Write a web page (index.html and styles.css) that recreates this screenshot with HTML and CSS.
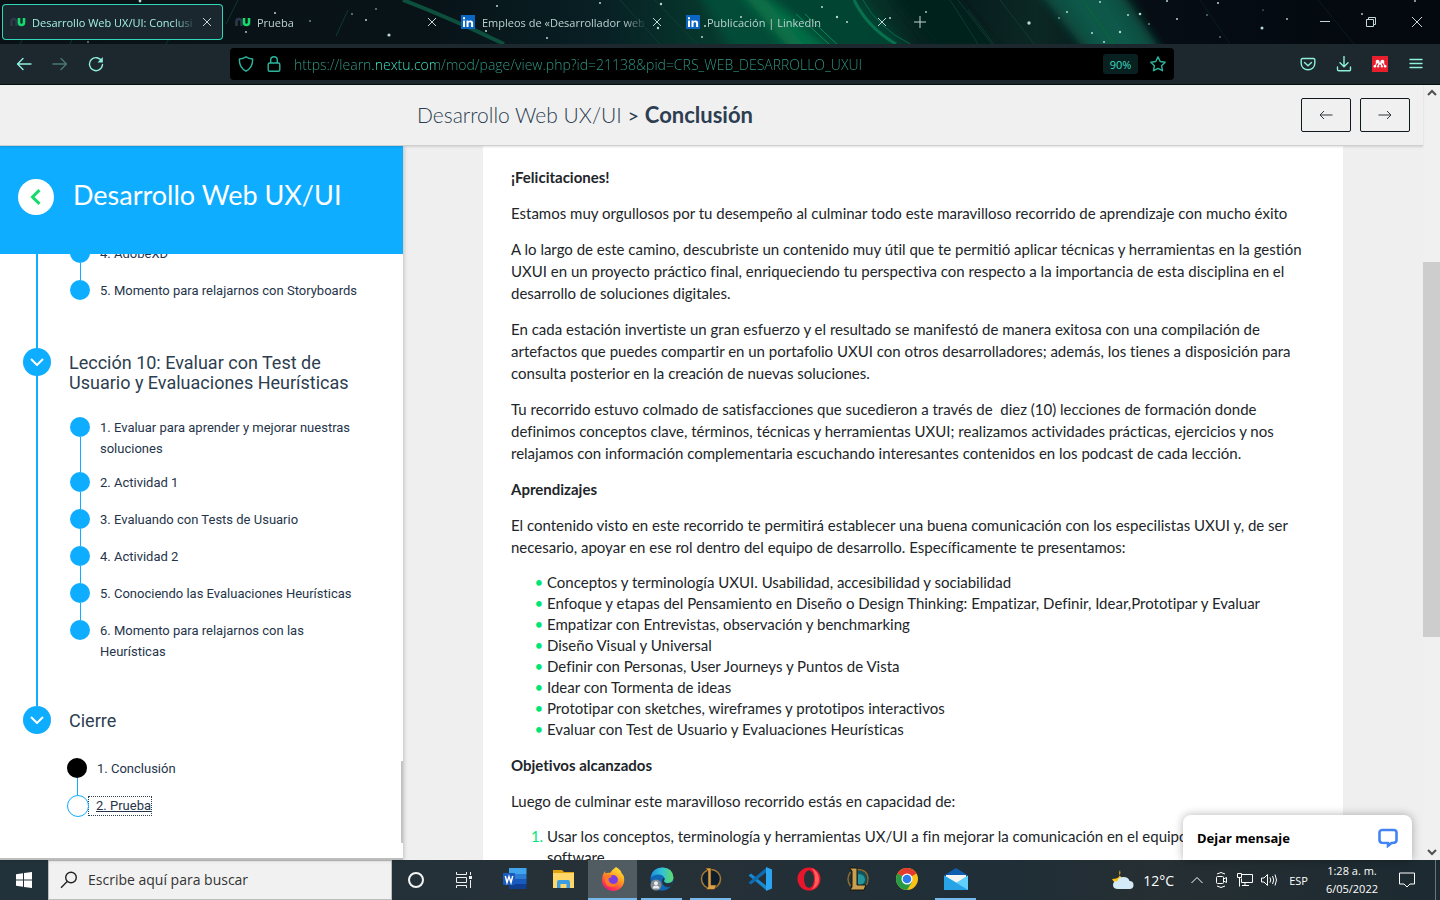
FILE: index.html
```html
<!DOCTYPE html>
<html lang="es">
<head>
<meta charset="utf-8">
<title>Desarrollo Web UX/UI: Conclusión</title>
<link rel="stylesheet" href="styles.css">
</head>
<body>
<div class="screen">
  <div class="tabstrip">
    <svg class="sky" viewBox="0 0 1440 44" preserveAspectRatio="none" aria-hidden="true">
      <defs>
        <linearGradient id="g0" x1="0" x2="1"><stop offset="0" stop-color="#091116"/><stop offset=".3" stop-color="#081318"/><stop offset=".42" stop-color="#082024"/><stop offset=".5" stop-color="#063a2e"/><stop offset=".6" stop-color="#063529"/><stop offset=".66" stop-color="#071b1d"/><stop offset=".72" stop-color="#0b2824"/><stop offset=".8" stop-color="#060d14"/><stop offset="1" stop-color="#04080f"/></linearGradient>
        <filter id="soft" x="-10%" y="-50%" width="120%" height="200%"><feGaussianBlur stdDeviation="5"/></filter>
      </defs>
      <rect width="1440" height="44" fill="url(#g0)"/>
      <g filter="url(#soft)">
        <path d="M690-20h60l70 84h-80z" fill="#07543a" opacity=".7"/>
        <path d="M730-20h14l112 84h-54z" fill="#087a4c" opacity=".8"/>
        <path d="M752-20h90l80 84h-80z" fill="#064935" opacity=".8"/>
        <path d="M880-20h60l70 84h-64z" fill="#04201c"/>
        <path d="M1030-20h84l56 84h-74z" fill="#0f4f42"/>
        <path d="M1054-20h44l50 84h-36z" fill="#12604f" opacity=".6"/>
      </g>
      <g fill="none" stroke-width="1">
        <path d="M403 0Q450 18 504 44" stroke="#0d4f3d" stroke-width="4"/>
        <path d="M854 0Q868 28 896 44" stroke="#0b8558" stroke-width="3" opacity=".7"/>
        <path d="M863 0Q878 28 910 44" stroke="#0a6a48"/>
        <path d="M796 14l33 30M805 14l36 34" stroke="#0b8a58"/>
        <path d="M1084 2l30 42" stroke="#0c6a2f"/>
        <path d="M20 44L34 18M70 44L88 6M166 44l22-38M226 24l12-24M336 36l12-26" stroke="#0b3b2f"/>
        <path d="M958 0l34 44M950 0l28 44M1000 0l34 44M968 10l26 34M620 0l40 44M655 0l42 44" stroke="#164139" opacity=".7"/>
        <path d="M1318 0l36 44M1200 0l30 44" stroke="#0a1c20"/>
      </g>
      <g fill="#b9d8d5">
        <circle cx="140" cy="1" r="1.4"/><circle cx="389" cy="35" r="1.6"/><circle cx="366" cy="20" r="1"/><circle cx="275" cy="13" r="1"/><circle cx="376" cy="9" r=".8"/><circle cx="246" cy="32" r=".9"/><circle cx="310" cy="21" r=".8"/><circle cx="352" cy="14" r=".8"/><circle cx="88" cy="42" r=".8"/>
        <circle cx="497" cy="6" r="1"/><circle cx="486" cy="31" r="1"/><circle cx="661" cy="4" r="1.2"/><circle cx="658" cy="28" r="1.2"/><circle cx="547" cy="38" r="1"/><circle cx="600" cy="3" r="1"/><circle cx="741" cy="17" r="1"/><circle cx="822" cy="7" r="1"/><circle cx="837" cy="17" r="1.2"/><circle cx="847" cy="22" r="1"/><circle cx="702" cy="37" r="1"/><circle cx="926" cy="12" r=".9"/><circle cx="890" cy="18" r="1"/><circle cx="705" cy="26" r="1"/>
        <circle cx="1029" cy="23" r="1.7"/><circle cx="1067" cy="12" r="1"/><circle cx="1059" cy="18" r=".8"/><circle cx="1100" cy="2" r="1"/><circle cx="1140" cy="14" r="1.3"/><circle cx="1128" cy="15" r="1"/><circle cx="1149" cy="24" r=".8"/><circle cx="1092" cy="33" r="1"/><circle cx="1120" cy="32" r="1.2"/><circle cx="1104" cy="42" r="1"/><circle cx="1167" cy="1" r="1"/><circle cx="1218" cy="3" r="1"/><circle cx="1177" cy="19" r="1"/><circle cx="1262" cy="28" r="1.5"/><circle cx="1263" cy="10" r=".6"/><circle cx="1287" cy="19" r=".9"/><circle cx="1362" cy="14" r=".9"/><circle cx="1415" cy="1" r=".9"/><circle cx="1220" cy="37" r=".7"/><circle cx="1207" cy="15" r=".7"/>
      </g>
    </svg>
    <div class="tab tab-on">
      <svg width="16" height="16" viewBox="0 0 16 16" fill="none" stroke-width="2.6"><path d="M1.5 12V7.500a2.500 2.500 0 0 1 5 0V12" stroke="#2b3a4b"/><path d="M9 4v4.500a2.500 2.500 0 0 0 5 0V4" stroke="#14dc6c"/></svg>
      <span class="tab-name">Desarrollo Web UX/UI: Conclusi</span>
      <button class="tab-x" aria-label="Cerrar pestaña"><svg width="8" height="8" viewBox="0 0 8 8"><path d="M0 0l8 8M8 0L0 8"/></svg></button>
    </div>
    <div class="tab">
      <svg width="16" height="16" viewBox="0 0 16 16" fill="none" stroke-width="2.6"><path d="M1.500 12V7.500a2.500 2.500 0 0 1 5 0V12" stroke="#2b3a4b"/><path d="M9 4v4.500a2.500 2.500 0 0 0 5 0V4" stroke="#14dc6c"/></svg>
      <span class="tab-name">Prueba</span>
      <button class="tab-x" aria-label="Cerrar pestaña"><svg width="8" height="8" viewBox="0 0 8 8"><path d="M0 0l8 8M8 0L0 8"/></svg></button>
    </div>
    <div class="tab">
      <svg width="16" height="16" viewBox="0 0 16 16"><path d="M1 1h14v14H1z" fill="#0a66c2"/><path d="M3 6.500h2V13H3zM3 3.200h2v2H3zM6.500 6.500h2v1c1-1.700 4.600-1.600 4.600 1.500v4h-2V9.500c0-1.800-2.600-1.800-2.600 0V13h-2z" fill="#fff"/></svg>
      <span class="tab-name">Empleos de «Desarrollador web</span>
      <button class="tab-x" aria-label="Cerrar pestaña"><svg width="8" height="8" viewBox="0 0 8 8"><path d="M0 0l8 8M8 0L0 8"/></svg></button>
    </div>
    <div class="tab">
      <svg width="16" height="16" viewBox="0 0 16 16"><path d="M1 1h14v14H1z" fill="#0a66c2"/><path d="M3 6.500h2V13H3zM3 3.200h2v2H3zM6.500 6.500h2v1c1-1.700 4.600-1.600 4.600 1.500v4h-2V9.500c0-1.800-2.600-1.800-2.600 0V13h-2z" fill="#fff"/></svg>
      <span class="tab-name">Publicación | LinkedIn</span>
      <button class="tab-x" aria-label="Cerrar pestaña"><svg width="8" height="8" viewBox="0 0 8 8"><path d="M0 0l8 8M8 0L0 8"/></svg></button>
    </div>
    <button class="tab-new" aria-label="Nueva pestaña"><svg width="12" height="12" viewBox="0 0 12 12"><path d="M6 0v12M0 6h12"/></svg></button>
    <div class="winbtns">
      <button aria-label="Minimizar"><svg width="10" height="10" viewBox="0 0 10 10"><path d="M0 4.500h10"/></svg></button>
      <button aria-label="Restaurar"><svg width="10" height="10" viewBox="0 0 10 10"><path d="M.5 2.500h7v7h-7zM2.500 2.500v-2h7v7h-2"/></svg></button>
      <button aria-label="Cerrar"><svg width="10" height="10" viewBox="0 0 10 10"><path d="M0 0l10 10M10 0L0 10"/></svg></button>
    </div>
  </div>

  <div class="toolbar">
    <button class="tool" aria-label="Atrás"><svg width="16" height="16" viewBox="0 0 16 16"><path d="M15 8H1.500M7 2.500L1.500 8 7 13.500"/></svg></button>
    <button class="tool tool-dim" aria-label="Adelante"><svg width="16" height="16" viewBox="0 0 16 16"><path d="M1 8h13.500M9 2.500L14.500 8 9 13.500"/></svg></button>
    <button class="tool" aria-label="Recargar"><svg width="16" height="16" viewBox="0 0 16 16"><path d="M13.700 5A6.500 6.500 0 1 0 14.500 8.500"/><path d="M14.800 1v5.500H9.500z" fill="#8ff0dc" stroke="none"/></svg></button>
    <span class="spring"></span>
    <div class="urlbar">
      <svg width="16" height="16" viewBox="0 0 16 16"><path d="M8 .8C10 2 12 2.700 14.600 3c.3 5.200-1.600 9.600-6.600 12.200C3 12.600 1.100 8.200 1.400 3 4 2.700 6 2 8 .8z"/></svg>
      <svg width="16" height="16" viewBox="0 0 16 16"><rect x="2.200" y="7" width="11.600" height="8.200" rx="1.500"/><path d="M4.700 7V4a3.300 3.300 0 0 1 6.600 0v3"/></svg>
      <input class="url" type="text" aria-label="Dirección" value="https://learn.nextu.com/mod/page/view.php?id=21138&amp;pid=CRS_WEB_DESARROLLO_UXUI">
      <button class="zoom-pct">90%</button>
      <button class="star" aria-label="Marcador"><svg width="16" height="16" viewBox="0 0 16 16"><path d="M8 .9l2.200 4.600 5 .7-3.600 3.500.9 5L8 12.300l-4.500 2.400.9-5L.8 6.200l5-.7z"/></svg></button>
    </div>
    <span class="spring"></span>
    <button class="tool" aria-label="Pocket"><svg width="16" height="16" viewBox="0 0 16 16"><path d="M2.500 2.500h11A1.300 1.300 0 0 1 14.800 4v3.500a6.800 6.300 0 0 1-13.600 0V4a1.300 1.300 0 0 1 1.300-1.500zM4.500 6.500L8 9.700l3.500-3.200"/></svg></button>
    <button class="tool" aria-label="Descargas"><svg width="16" height="16" viewBox="0 0 16 16"><path d="M8 .5v10M4 6.700l4 4 4-4M1.500 11v2.500a1.300 1.300 0 0 0 1.300 1.300h10.400a1.300 1.300 0 0 0 1.300-1.300V11"/></svg></button>
    <button class="tool" aria-label="Mendeley"><svg width="16" height="16" viewBox="0 0 16 16"><path d="M0 0h16v16H0z" fill="#e8202e" stroke="none"/><g fill="#fff" stroke="none"><circle cx="5.600" cy="5.600" r="1.900"/><circle cx="10.400" cy="5.600" r="1.900"/><circle cx="2.900" cy="10.300" r="1.300"/><circle cx="13.100" cy="10.300" r="1.300"/><circle cx="8" cy="7.500" r="1.300"/><circle cx="6.200" cy="10.400" r="1.100"/><circle cx="9.800" cy="10.400" r="1.100"/></g><path d="M4.700 5.500q-.2 3-1.800 5M11.300 5.500q.2 3 1.800 5M7 7.500l-.8 3M9 7.500l.8 3" stroke="#fff" stroke-width="1.200"/></svg></button>
    <button class="tool" aria-label="Menú"><svg width="16" height="16" viewBox="0 0 16 16"><path d="M2 3.500h12M2 7.500h12M2 11.500h12"/></svg></button>
  </div>

  <div class="viewport">
    <div class="page">
      <header class="topbar">
        <h1 class="crumbs">Desarrollo Web UX/UI <span>&gt;</span> <b>Conclusión</b></h1>
        <nav class="pager">
          <button aria-label="Anterior"><svg width="14" height="10" viewBox="0 0 14 10"><path d="M13.500 5H1M5 1L1 5l4 4"/></svg></button>
          <button aria-label="Siguiente"><svg width="14" height="10" viewBox="0 0 14 10"><path d="M.5 5H13M9 1l4 4-4 4"/></svg></button>
        </nav>
      </header>
      <div class="columns">
        <aside class="side">
          <div class="side-title">
            <button class="back" aria-label="Volver"><svg width="12" height="16" viewBox="0 0 12 16"><path d="M9.500 1.200L2.500 8l7 6.800"/></svg></button>
            <h2>Desarrollo Web UX/UI</h2>
          </div>
          <div class="lessons">
            <section class="lesson">
              <ul>
                <li><a href="#">4. AdobeXD</a></li>
                <li><a href="#">5. Momento para relajarnos con Storyboards</a></li>
              </ul>
            </section>
            <section class="lesson">
              <div class="lesson-head">
                <button class="fold" aria-label="Plegar"><svg width="14" height="8" viewBox="0 0 14 8"><path d="M1 1l6 6 6-6"/></svg></button>
                <h3>Lección 10: Evaluar con Test de Usuario y Evaluaciones Heurísticas</h3>
              </div>
              <ul>
                <li><a href="#">1. Evaluar para aprender y mejorar nuestras soluciones</a></li>
                <li><a href="#">2. Actividad 1</a></li>
                <li><a href="#">3. Evaluando con Tests de Usuario</a></li>
                <li><a href="#">4. Actividad 2</a></li>
                <li><a href="#">5. Conociendo las Evaluaciones Heurísticas</a></li>
                <li><a href="#">6. Momento para relajarnos con las Heurísticas</a></li>
              </ul>
            </section>
            <section class="lesson lesson-last">
              <div class="lesson-head">
                <button class="fold" aria-label="Plegar"><svg width="14" height="8" viewBox="0 0 14 8"><path d="M1 1l6 6 6-6"/></svg></button>
                <h3>Cierre</h3>
              </div>
              <ul>
                <li class="now"><a href="#">1. Conclusión</a></li>
                <li class="todo"><a class="focused" href="#">2. Prueba</a></li>
              </ul>
            </section>
            <span class="side-thumb"></span>
          </div>
        </aside>
        <main class="content">
          <article class="article">
            <p><b>¡Felicitaciones!</b></p>
            <p>Estamos muy orgullosos por tu desempeño al culminar todo este maravilloso recorrido de aprendizaje con mucho éxito</p>
            <p>A lo largo de este camino, descubriste un contenido muy útil que te permitió aplicar técnicas y herramientas en la gestión<br>UXUI en un proyecto práctico final, enriqueciendo tu perspectiva con respecto a la importancia de esta disciplina en el<br>desarrollo de soluciones digitales.</p>
            <p>En cada estación invertiste un gran esfuerzo y el resultado se manifestó de manera exitosa con una compilación de<br>artefactos que puedes compartir en un portafolio UXUI con otros desarrolladores; además, los tienes a disposición para<br>consulta posterior en la creación de nuevas soluciones.</p>
            <p>Tu recorrido estuvo colmado de satisfacciones que sucedieron a través de&nbsp; diez (10) lecciones de formación donde<br>definimos conceptos clave, términos, técnicas y herramientas UXUI; realizamos actividades prácticas, ejercicios y nos<br>relajamos con información complementaria escuchando interesantes contenidos en los podcast de cada lección.</p>
            <p><b>Aprendizajes</b></p>
            <p>El contenido visto en este recorrido te permitirá establecer una buena comunicación con los especilistas UXUI y, de ser<br>necesario, apoyar en ese rol dentro del equipo de desarrollo. Específicamente te presentamos:</p>
            <ul>
              <li>Conceptos y terminología UXUI. Usabilidad, accesibilidad y sociabilidad</li>
              <li>Enfoque y etapas del Pensamiento en Diseño o Design Thinking: Empatizar, Definir, Idear,Prototipar y Evaluar</li>
              <li>Empatizar con Entrevistas, observación y benchmarking</li>
              <li>Diseño Visual y Universal</li>
              <li>Definir con Personas, User Journeys y Puntos de Vista</li>
              <li>Idear con Tormenta de ideas</li>
              <li>Prototipar con sketches, wireframes y prototipos interactivos</li>
              <li>Evaluar con Test de Usuario y Evaluaciones Heurísticas</li>
            </ul>
            <p><b>Objetivos alcanzados</b></p>
            <p>Luego de culminar este maravilloso recorrido estás en capacidad de:</p>
            <ol>
              <li>Usar los conceptos, terminología y herramientas UX/UI a fin mejorar la comunicación en el equipo<br>software.</li>
            </ol>
          </article>
        </main>
      </div>
      <button class="chat"><span>Dejar mensaje</span><svg width="20" height="20" viewBox="0 0 20 20"><path d="M4.500 2h11Q18.500 2 18.500 4.500v7.500q0 2.500-2.500 2.700l-2.500.3-3.500 2.800v-2.800L4 14.700Q1.500 14.500 1.500 12V4.500Q1.500 2 4.500 2z" fill="none" stroke="#4384f5" stroke-width="2.600"/></svg></button>
    </div>
    <div class="scrollbar">
      <svg width="10" height="16" viewBox="0 0 10 16"><path d="M1 10l4-4 4 4"/></svg>
      <div class="track"><span class="thumb"></span></div>
      <svg width="10" height="16" viewBox="0 0 10 16"><path d="M1 6l4 4 4-4"/></svg>
    </div>
  </div>

  <footer class="taskbar">
    <button class="task-btn" aria-label="Inicio"><svg width="16" height="16" viewBox="0 0 16 16"><path d="M0 2.200l7-1v6.300H0zM8 1l8-1v7.500H8zM0 8.500h7v6.300l-7-1zM8 8.500h8V16l-8-1z" fill="#fff"/></svg></button>
    <label class="search">
      <svg width="18" height="18" viewBox="0 0 18 18"><circle cx="11" cy="6.500" r="5.300"/><path d="M7.200 10.400L1 16.700"/></svg>
      <input type="text" placeholder="Escribe aquí para buscar" aria-label="Buscar">
    </label>
    <button class="task-btn" aria-label="Cortana"><svg width="18" height="18" viewBox="0 0 18 18"><circle cx="9" cy="9" r="7" fill="none" stroke="#f4f4f4" stroke-width="2"/></svg></button>
    <button class="task-btn" aria-label="Vista de tareas"><svg width="18" height="16" viewBox="0 0 18 16" fill="none" stroke="#f0f0f0"><path d="M1.500 0v2.500h10V0M1.500 5.500h10v5h-10zM1.500 16v-2.500h10V16M15.500 0v3M15.500 8v8"/><path d="M14 4h3v3h-3z" fill="#f0f0f0" stroke="none"/></svg></button>
    <div class="apps">
      <button class="app" aria-label="Word"><svg width="24" height="24" viewBox="0 0 24 24"><path d="M6 1h17.500v6H6z" fill="#41a5ee"/><path d="M6 7h17.500v5H6z" fill="#2b7cd3"/><path d="M6 12h17.500v5H6z" fill="#185abd"/><path d="M6 17h17.500v5H6z" fill="#103f91"/><rect y="6" width="12" height="12" rx="1" fill="#185abd"/><path d="M2.300 9l1.700 6.500L6 9.500l2 6L9.700 9" fill="none" stroke="#fff" stroke-width="1.500"/></svg></button>
      <button class="app" aria-label="Explorador"><svg width="24" height="24" viewBox="0 0 24 24"><path d="M1 3h9l2 2h10v6H1z" fill="#e2a210"/><path d="M1 6h21v15H1z" fill="#ffd869"/><path d="M5 21v-6q0-2 2-2h9q2 0 2 2v6h-3.500v-4h-6v4z" fill="#3d9de2"/></svg></button>
      <button class="app app-on app-top" aria-label="Firefox"><svg width="24" height="24" viewBox="0 0 24 24"><defs><linearGradient id="ff" x1=".8" y1="0" x2=".25" y2="1"><stop offset="0" stop-color="#ffe83c"/><stop offset=".45" stop-color="#ff9a1e"/><stop offset=".8" stop-color="#ff3750"/><stop offset="1" stop-color="#e3158b"/></linearGradient></defs><path d="M15 0q5 3 5.500 6 3 2.500 2.700 7A11 11 0 0 1 1 13Q.8 8 4 4l.5 2.500Q7 5.500 9 6q3-4 6-6z" fill="url(#ff)"/><circle cx="12" cy="13" r="5" fill="#7a3fe0"/><path d="M4 8.500q4-2 7 .5-.5 1.800-3.500 2.300Q7 16 12 17q4.500 0 5-4 .5 4.500-3.500 6.500Q7 21 4.500 16 3 12 4 8.500z" fill="#ff7a24"/></svg></button>
      <button class="app app-on" aria-label="Edge"><svg width="24" height="24" viewBox="0 0 24 24"><defs><linearGradient id="ed" x1="0" x2="1"><stop offset="0" stop-color="#1b8fdc"/><stop offset=".5" stop-color="#32c2d8"/><stop offset="1" stop-color="#5fdc62"/></linearGradient></defs><circle cx="12" cy="12" r="11.500" fill="#1067b5"/><path d="M.5 11Q2 .5 12.500.5 23 1 23.500 10.500q-.5 5.500-6.500 5.500-5-.5-2.500-4Q14 7.500 8.500 7.500 3 7.500.5 11z" fill="url(#ed)"/><path d="M15 11.500q-2.500 4 2 4.700 4 .3 6.300-2.200l-2 5.500q-4 1.500-7-.5-4-3.500-1-8z" fill="#25323a"/><circle cx="6" cy="18" r="5.500" fill="#858b90"/><circle cx="6" cy="16.300" r="2" fill="#eceff1"/><path d="M2.500 21.500q.5-3 3.500-3t3.500 3" fill="#eceff1"/></svg></button>
      <button class="app app-on" aria-label="League of Legends"><svg width="24" height="24" viewBox="0 0 24 24"><circle cx="12" cy="12" r="9.500" fill="#0d1d2c" stroke="#a57a35" stroke-width="1.500"/><path d="M6.500 1H12v17h5.500L15.500 22.500H7l2-3V4z" fill="#d9a04b" stroke="#3a2a12" stroke-width=".6"/></svg></button>
      <button class="app" aria-label="Visual Studio Code"><svg width="24" height="24" viewBox="0 0 24 24"><path d="M.5 8.500l2.500-2 15 12V23z" fill="#1889d1"/><path d="M.5 15.500l2.500 2L18 5.500V1z" fill="#0d6cb0"/><path d="M18 0l6 2.500v19L18 24z" fill="#2ba5f2"/></svg></button>
      <button class="app" aria-label="Opera"><svg width="24" height="24" viewBox="0 0 24 24"><circle cx="12" cy="12" r="11.500" fill="#e7162b"/><path d="M14 1a11.500 11.500 0 0 1 0 22q4-3 4-11T14 1z" fill="#ff5c5c"/><ellipse cx="12" cy="12" rx="5" ry="8.700" fill="#25323a"/></svg></button>
      <button class="app" aria-label="League of Legends"><svg width="24" height="24" viewBox="0 0 24 24"><path d="M11 3q10 1 10 9 0 5-4 7h-6z" fill="#0f5561"/><path d="M12 7q7 0 7 6-1 4-4 5h-3z" fill="#27969c"/><path d="M11 2.500q11 0 11 9.500 0 5-3 7" fill="none" stroke="#8b6a2e" stroke-width="1.300"/><path d="M4.500 5q-5 7 0 14" fill="none" stroke="#8b6a2e" stroke-width="1.500"/><path d="M3.500 1H11v17h9l-2 5h-14l2-3V4z" fill="#c9a050" stroke="#18140c"/></svg></button>
      <button class="app" aria-label="Chrome"><svg width="24" height="24" viewBox="0 0 24 24"><circle cx="12" cy="12" r="11" fill="#fbc116"/><path d="M12 12L2.500 6.500A11 11 0 0 1 21.500 6.500z" fill="#e33b2e"/><path d="M12 12L2.500 6.500A11 11 0 0 0 12 23l5-8z" fill="#269a45"/><path d="M12 7h9.800l-.3-.5L12 3z" fill="#e33b2e"/><circle cx="12" cy="12" r="5.500" fill="#fff"/><circle cx="12" cy="12" r="4.300" fill="#2b7de9"/></svg></button>
      <button class="app app-on" aria-label="Correo"><svg width="24" height="24" viewBox="0 0 24 24"><path d="M0 8.500L12 1l12 7.500z" fill="#0e5db0"/><path d="M2 8h20v9H2z" fill="#f4f4f4"/><path d="M0 8.500L13 16l11-7.500V23H0z" fill="#3cc0f5"/><path d="M24 8.500L12 16l12 7z" fill="#5fd1fb"/><path d="M0 8.500L24 23H0z" fill="#28a3e6"/></svg></button>
    </div>
    <div class="tray">
      <div class="weather"><svg width="24" height="20" viewBox="0 0 24 20"><path d="M9 0q-2 4 1 7t8 3q-3 5-9 4.500-6-1-8-5.500 6 0 7.500-3T9 0z" fill="#fcc419"/><path d="M7 19q-5 0-5-4t4.500-4q1-4 6-4t6 4q4 0 4 4t-4 4z" fill="#d3eaf8"/></svg><span>12°C</span></div>
      <button aria-label="Iconos ocultos"><svg width="14" height="14" viewBox="0 0 14 14"><path d="M1.500 10L7 4.500 12.500 10"/></svg></button>
      <button aria-label="Cámara"><svg width="14" height="18" viewBox="0 0 14 18"><path d="M3 3q4-3 8 0M3 15q4 3 8 0M3.500 5.500h5q1 0 1 1v5q0 1-1 1h-5q-1 0-1-1v-5q0-1 1-1zM9.500 8l3-1.500v5l-3-1.500"/></svg></button>
      <button aria-label="Red"><svg width="18" height="16" viewBox="0 0 18 16"><path d="M6 2.500h10.500v8h-11v-4M9 10.500v3M6 13.500h7M1.500 1.500h4v4h-4zM3.500 5.500v9"/></svg></button>
      <button aria-label="Volumen"><svg width="18" height="16" viewBox="0 0 18 16"><path d="M1.500 6H4l3.500-3.500v11L4 10H1.500zM10 5.500q1.500 2.500 0 5M12.500 4q2.500 4 0 8M15 2.500q3 5.500 0 11"/></svg></button>
      <span class="lang">ESP</span>
      <div class="clock"><span>1:28 a. m.</span><span>6/05/2022</span></div>
      <button class="notif" aria-label="Notificaciones"><svg width="18" height="18" viewBox="0 0 18 18"><path d="M1.500 2h15v11H12l-3 3-3-3H1.500z"/></svg></button>
      <span class="peek"></span>
    </div>
  </footer>
</div>
</body>
</html>
```
FILE: styles.css
```css
* { box-sizing: border-box; }

body {
  margin: 0;
  font-family: "Open Sans", "Noto Sans", sans-serif;
  font-size: 11px;
  color: #212529;
}

button {
  margin: 0;
  padding: 0;
  border: 0;
  background: none;
  font: inherit;
  color: inherit;
  display: flex;
  align-items: center;
  justify-content: center;
}

svg { display: block; flex: none; }
h1, h2, h3, ul, ol, p { margin: 0; padding: 0; }

.screen {
  height: 100vh;
  display: flex;
  flex-direction: column;
  overflow: hidden;
}

/* Tabs */
.tabstrip {
  position: relative;
  display: flex;
  align-items: center;
  gap: 4px;
  height: 44px;
  padding-left: 2px;
  background: #070f14;
}
.sky { position: absolute; inset: 0; width: 100%; height: 100%; }
.tab {
  position: relative;
  display: flex;
  align-items: center;
  gap: 6px;
  flex: 0 1 221px;
  min-width: 0;
  height: 36px;
  padding: 0 12px 0 8px;
  border-radius: 4px;
  color: #bcd3d0;
}
.tab-on {
  background: #1b272e;
  box-shadow: inset 0 0 0 1px #2fd6b8;
  color: #a3f0e0;
}
.tab-name {
  flex: 1;
  min-width: 0;
  overflow: hidden;
  white-space: nowrap;
  mask-image: linear-gradient(to right, #000 calc(100% - 24px), transparent);
}
.tab-x svg, .tab-new svg, .winbtns svg { fill: none; stroke: #c3d8d6; }
.tab-new { position: relative; width: 36px; height: 36px; }
.winbtns { position: relative; margin-left: auto; display: flex; align-self: stretch; }
.winbtns button { width: 46px; }

/* Navigation bar */
.toolbar {
  display: flex;
  align-items: center;
  height: 41px;
  padding: 0 6px;
  background: #1c272e;
  border-bottom: 1px solid #07110f;
}
.tool { width: 36px; height: 32px; }
.tool svg { fill: none; stroke: #8ff0dc; stroke-width: 1.4; stroke-linecap: round; stroke-linejoin: round; }
.tool-dim { opacity: .4; }
.spring { flex: 1; }
.urlbar {
  flex: 8;
  display: flex;
  align-items: center;
  gap: 12px;
  height: 32px;
  padding: 0 8px;
  border-radius: 4px;
  background: #000;
}
.urlbar svg { fill: none; stroke: #2bb59c; stroke-width: 1.4; stroke-linejoin: round; }
.url {
  flex: 1;
  min-width: 0;
  height: 24px;
  padding: 0;
  border: 0;
  outline: 0;
  font-family: "Open Sans", sans-serif;
  font-size: 14px;
  font-weight: 300;
  color: transparent;
  background: linear-gradient(to right, #319d8b 78px, #45f5d5 78px, #45f5d5 142px, #319d8b 142px);
  background-clip: text;
  -webkit-background-clip: text;
}
.zoom-pct {
  width: 35px;
  height: 20px;
  border-radius: 3px;
  background: #08201f;
  color: #3fdcc0;
}

/* Page */
.viewport { flex: 1; min-height: 0; display: flex; }
.page { position: relative; flex: 1; min-width: 0; display: flex; flex-direction: column; background: #efefef; }
.topbar {
  position: relative;
  z-index: 2;
  display: flex;
  align-items: center;
  justify-content: space-between;
  height: 61px;
  padding: 0 13px 0 417px;
  background: #f0f0f0;
  border-bottom: 1px solid #cfcfcf;
  box-shadow: 0 1px 2px rgba(0, 0, 0, .12);
}
.crumbs { font: 300 21px/28px Lato, sans-serif; color: #2c3e50; }
.crumbs span { font-weight: 400; font-size: 20px; }
.crumbs b { font-weight: 700; font-size: 22px; }
.pager { display: flex; gap: 9px; }
.pager button { width: 50px; height: 34px; border: 1px solid #10181f; border-radius: 2px; }
.pager svg { fill: none; stroke: #33383d; }

.columns { flex: 1; min-height: 0; display: flex; }

/* Course outline */
.side {
  width: 403px;
  flex: none;
  display: flex;
  flex-direction: column;
  background: #fff;
  box-shadow: 1px 0 4px rgba(0, 0, 0, .2);
}
.side-title {
  display: flex;
  align-items: center;
  gap: 19px;
  height: 108px;
  flex: none;
  padding: 0 18px 6px;
  background: #0fadff;
  color: #fff;
}
.side-title h2 { padding-bottom: 4px; font: 400 27px/36px Lato, sans-serif; }
.back { width: 36px; height: 36px; border-radius: 50%; background: #fff; }
.back svg { fill: none; stroke: #14dc6c; stroke-width: 3; }
.lessons {
  position: relative;
  flex: 1;
  min-height: 0;
  display: flex;
  flex-direction: column;
  justify-content: flex-end;
  overflow: hidden;
  padding-bottom: 39px;
  border-bottom: 2px solid #bdbdbd;
  font-family: Roboto, sans-serif;
  color: #2c3e50;
}
.side-thumb {
  position: absolute;
  right: 0;
  bottom: 15px;
  width: 2px;
  height: 82px;
  background: #c4c4c4;
}
.lesson { position: relative; flex: none; padding: 0 40px 44px 23px; }
.lesson::before {
  content: "";
  position: absolute;
  left: 36px;
  top: 0;
  bottom: 0;
  width: 2px;
  background: #0fadff;
}
.lesson-last { padding-bottom: 0; }
.lesson-last::before { display: none; }
.lesson-head { position: relative; display: flex; gap: 18px; margin-bottom: 24px; }
.lesson-head h3 { padding-top: 5px; font-size: 18px; font-weight: 400; line-height: 20px; }
.fold { width: 28px; height: 28px; flex: none; border-radius: 50%; background: #0fadff; }
.fold svg { fill: none; stroke: #fff; stroke-width: 2; }
.lesson ul { list-style: none; padding-left: 47px; display: flex; flex-direction: column; gap: 13px; }
.lesson-last ul { padding-left: 44px; }
.lesson li {
  position: relative;
  min-height: 24px;
  padding-left: 30px;
  font-size: 13px;
  line-height: 21px;
}
.lesson li::before {
  content: "";
  position: absolute;
  left: 0;
  top: 0;
  width: 20px;
  height: 20px;
  border-radius: 50%;
  background: #0fadff;
}
.lesson li:not(:last-child)::after {
  content: "";
  position: absolute;
  left: 10px;
  top: 20px;
  bottom: -13px;
  width: 1px;
  background: #0fadff;
}
.lesson li.now::before { background: #000; }
.lesson li.todo::before { background: #fff; border: 1px solid #0fadff; }
.lesson a { color: #25344a; text-decoration: none; }
.lesson a.focused {
  display: inline-block;
  line-height: 18px;
  margin-left: -8px;
  padding-left: 7px;
  outline: 1px dotted #2c3e50;
  text-decoration: underline;
}

/* Lesson text */
.content { flex: 1; min-width: 0; overflow: hidden; padding: 0 80px; }
.article {
  min-height: 100%;
  padding: 20px 28px;
  background: #fff;
  font: 400 15px/22px Lato, sans-serif;
  font-variant-ligatures: no-common-ligatures;
  color: #212529;
}
.article p, .article ul, .article ol { margin-bottom: 14px; }
.article ul, .article ol { padding-left: 36px; }
.article li { line-height: 21px; }
.article li::marker { color: #00e676; }
.article ul li::marker { content: "•\00a0"; }

.chat {
  position: absolute;
  z-index: 3;
  right: 11px;
  bottom: 0;
  width: 229px;
  height: 45px;
  padding: 0 14px;
  justify-content: space-between;
  border-radius: 8px 8px 0 0;
  background: #fff;
  box-shadow: 0 0 10px rgba(0, 0, 0, .3);
  font-family: "Noto Sans", sans-serif;
  font-size: 13px;
  font-weight: 700;
  color: #000;
}

.scrollbar {
  width: 17px;
  display: flex;
  flex-direction: column;
  align-items: center;
  background: #f0f0f0;
}
.scrollbar svg { fill: none; stroke: #505050; stroke-width: 2; }
.track { flex: 1; align-self: stretch; display: grid; grid-template-rows: 161fr 375fr 207fr; }
.thumb { grid-row: 2; background: #cdcdcd; }

/* Taskbar */
.taskbar {
  display: flex;
  height: 40px;
  background: linear-gradient(to right, #22323a, #263037 45%, #1f2e37 70%, #262f33 80%, #1c2a31);
  color: #fff;
}
.task-btn { width: 48px; }
.search {
  flex: 0 1 344px;
  display: flex;
  align-items: center;
  gap: 10px;
  padding: 0 11px;
  background: #f1f1f1;
  border: 1px solid #bcbcbc;
}
.search svg { fill: none; stroke: #222; stroke-width: 1.4; }
.search input {
  flex: 1;
  min-width: 0;
  padding: 0;
  border: 0;
  outline: 0;
  background: none;
  font: 400 14px/20px "Open Sans", sans-serif;
}
.search input::placeholder { color: #333; }
.apps { display: flex; padding-left: 2px; }
.app { width: 49px; border-bottom: 2px solid transparent; }
.app-on { width: 41px; margin: 0 4px; border-bottom-color: #76b9ed; }
.app-top { width: 49px; margin: 0; background: #505b62; }
.tray { margin-left: auto; display: flex; align-items: center; }
.tray button { width: 24px; height: 40px; }
.tray svg { fill: none; stroke: #fff; }
.weather { display: flex; align-items: center; gap: 8px; margin-right: 11px; font-size: 14px; }
.weather svg { stroke: none; }
.lang { margin: 0 18px 0 8px; }
.clock { display: flex; flex-direction: column; align-items: center; line-height: 18px; }
.tray .notif { width: 57px; }
.peek { width: 5px; height: 40px; border-left: 1px solid #6b767c; }
```
